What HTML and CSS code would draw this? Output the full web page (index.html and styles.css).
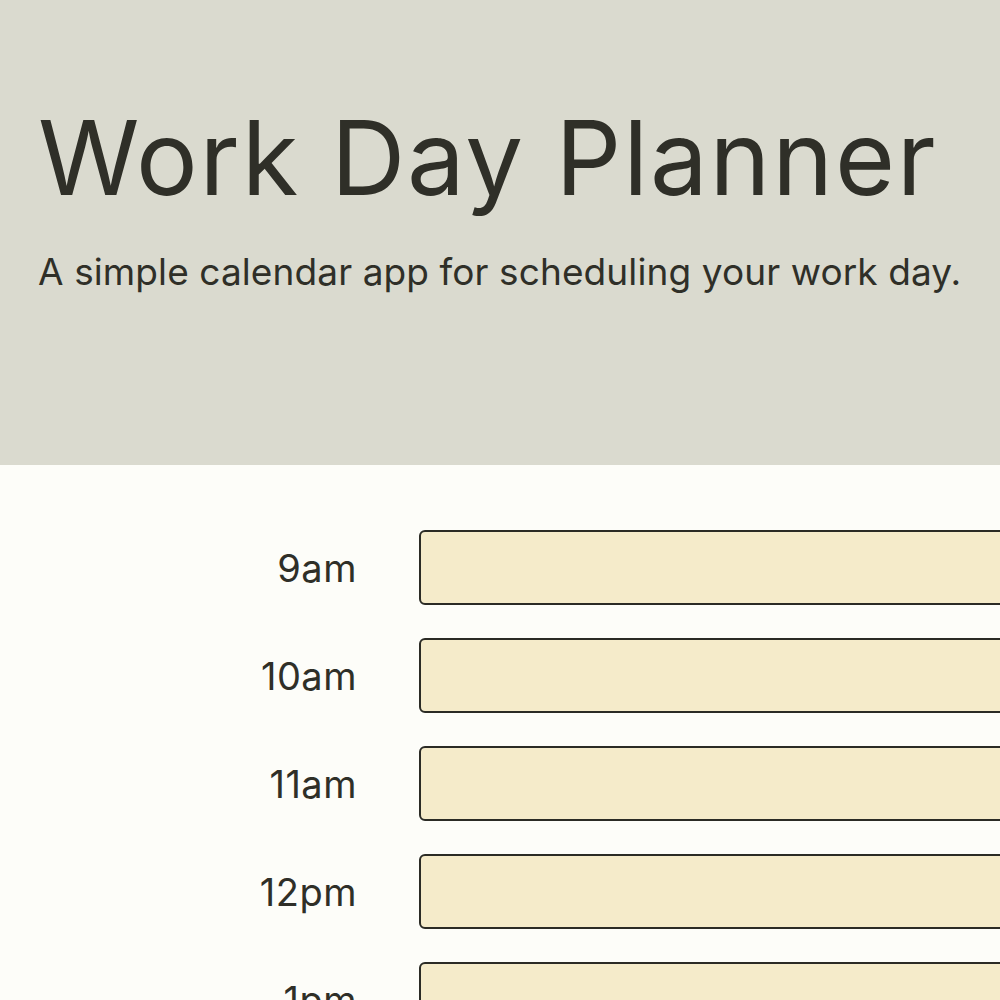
FILE: index.html
```html
<!DOCTYPE html>
<html lang="en">
<head>
<meta charset="utf-8">
<title>Work Day Planner</title>
<link rel="stylesheet" href="styles.css">
</head>
<body>
<header class="hero">
  <h1 class="title">Work Day Planner</h1>
  <p class="lead">A simple calendar app for scheduling your work day.</p>
</header>
<main class="planner">
  <div class="row"><div class="hour">9am</div><div class="slot"></div></div>
  <div class="row"><div class="hour">10am</div><div class="slot"></div></div>
  <div class="row"><div class="hour">11am</div><div class="slot"></div></div>
  <div class="row"><div class="hour">12pm</div><div class="slot"></div></div>
  <div class="row"><div class="hour">1pm</div><div class="slot"></div></div>
  <div class="row"><div class="hour">2pm</div><div class="slot"></div></div>
</main>
</body>
</html>
```
FILE: styles.css
```css
html, body {
  margin: 0;
  padding: 0;
  overflow: hidden;
}
body {
  background: #fdfdf9;
  color: #2f2f28;
  font-family: "Inter", "Lato", sans-serif;
}
.hero {
  background: #dadacf;
  height: 465px;
  box-sizing: border-box;
  padding: 98px 38px 0;
}
.title {
  margin: 0;
  font-weight: 400;
  font-size: 103px;
  line-height: 120px;
  letter-spacing: 1.8px;
}
.lead {
  margin: 30px 0 0;
  font-size: 37px;
  line-height: 48px;
  letter-spacing: 0.1px;
  white-space: nowrap;
}
.planner {
  padding-top: 65px;
  display: flex;
  flex-direction: column;
  gap: 33px;
}
.row {
  display: flex;
  align-items: center;
  gap: 62px;
}
.hour {
  flex: none;
  width: 357px;
  text-align: right;
  font-size: 38px;
  letter-spacing: 0.5px;
}
.slot {
  width: 700px;
  flex: none;
  height: 71px;
  border: 2px solid #2b2b25;
  border-radius: 6px;
  background: #f5ebca;
}
```
